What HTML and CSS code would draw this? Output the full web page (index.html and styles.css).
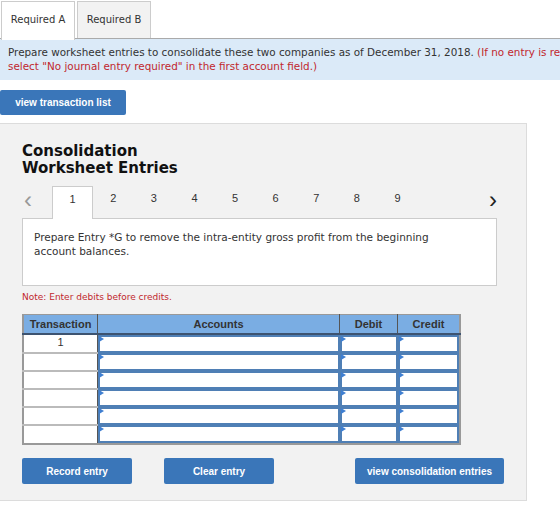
FILE: index.html
```html
<!DOCTYPE html>
<html>
<head>
    <meta charset="UTF-8">
    <title>Consolidation Worksheet</title>
    <link rel="stylesheet" href="styles.css">
</head>
<body>
    <div class="tabs">
        <div class="tab active">Required A</div>
        <div class="tab">Required B</div>
    </div>
    <div class="instructions">
        Prepare worksheet entries to consolidate these two companies as of December 31, 2018.
        <span class="red">(If no entry is required, select "No journal entry required" in the first account field.)</span>
    </div>

    <button class="btn btn-list">view transaction list</button>

    <div class="panel">
        <h2 class="panel-title">Consolidation<br>Worksheet Entries</h2>

        <div class="pager">
            <span class="arrow prev">&lsaquo;</span>
            <div class="pages">
                <span class="page current">1</span>
                <span class="page">2</span>
                <span class="page">3</span>
                <span class="page">4</span>
                <span class="page">5</span>
                <span class="page">6</span>
                <span class="page">7</span>
                <span class="page">8</span>
                <span class="page">9</span>
            </div>
            <span class="arrow next">&rsaquo;</span>
        </div>
        <div class="entry-text">
            Prepare Entry *G to remove the intra-entity gross profit from the beginning account balances.
        </div>

        <p class="note">Note: Enter debits before credits.</p>

        <table class="journal">
            <tr>
                <th class="col-trans">Transaction</th>
                <th class="col-acct">Accounts</th>
                <th class="col-num">Debit</th>
                <th class="col-num">Credit</th>
            </tr>
            <tr>
                <td class="trans">1</td>
                <td class="field"><div class="box"></div></td>
                <td class="field"><div class="box"></div></td>
                <td class="field"><div class="box"></div></td>
            </tr>
            <tr>
                <td class="trans"></td>
                <td class="field"><div class="box"></div></td>
                <td class="field"><div class="box"></div></td>
                <td class="field"><div class="box"></div></td>
            </tr>
            <tr>
                <td class="trans"></td>
                <td class="field"><div class="box"></div></td>
                <td class="field"><div class="box"></div></td>
                <td class="field"><div class="box"></div></td>
            </tr>
            <tr>
                <td class="trans"></td>
                <td class="field"><div class="box"></div></td>
                <td class="field"><div class="box"></div></td>
                <td class="field"><div class="box"></div></td>
            </tr>
            <tr>
                <td class="trans"></td>
                <td class="field"><div class="box"></div></td>
                <td class="field"><div class="box"></div></td>
                <td class="field"><div class="box"></div></td>
            </tr>
            <tr>
                <td class="trans"></td>
                <td class="field"><div class="box"></div></td>
                <td class="field"><div class="box"></div></td>
                <td class="field"><div class="box"></div></td>
            </tr>
        </table>

        <div class="actions">
            <button class="btn btn-record">Record entry</button>
            <button class="btn btn-clear">Clear entry</button>
            <button class="btn btn-view">view consolidation entries</button>
        </div>
    </div>
</body>
</html>
```

FILE: styles.css
```css
html {
    overflow: hidden; /* the page is wider than the window */
}

body {
    margin: 0;
    width: 630px;
    font-family: "DejaVu Sans", Verdana, sans-serif;
    font-size: 10.4px;
    color: #333;
    background: #fff;
}

/* Top tabs */
.tabs {
    display: flex;
    gap: 2px;
    padding: 1px 0 0 1px;
    border-bottom: 1px solid #aaa;
    height: 37px;
}

.tab {
    width: 72px;
    border: 1px solid #ccc;
    border-bottom: none;
    background: #f2f2f2;
    font-size: 10px;
    line-height: 36px;
    text-align: center;
    color: #333;
}

.tab.active {
    background: #fff;
    height: 38px;
}

.instructions {
    background: #dbeaf8;
    padding: 6px 8px 7px 8px;
    line-height: 14px;
    color: #333;
}

.red {
    color: #c1272d;
}

/* Buttons */
.btn {
    display: block;
    border: none;
    border-radius: 2px;
    background: #3a76b9;
    color: #fff;
    font-family: "Liberation Sans", Arial, sans-serif;
    font-weight: bold;
    font-size: 10px;
    height: 25px;
    padding: 0;
}

.btn-list {
    width: 126px;
    margin-top: 10px;
}

/* The grey panel */
.panel {
    width: 504px;
    margin-top: 8px;
    background: #f2f2f2;
    border: 1px solid #dcdcdc;
    border-left: none;
    padding: 19px 0 16px 22px;
}

.panel-title {
    margin: 0;
    font-size: 15px;
    line-height: 17px;
    font-weight: bold;
    color: #111;
}

.pager {
    display: flex;
    align-items: flex-end;
    margin-top: 9px;
    width: 475px;
    height: 32px;
}

.arrow {
    font-family: "Liberation Sans", Arial, sans-serif;
    font-size: 24px;
    line-height: 24px;
    color: #999;
    width: 28px;
    padding-left: 2px;
    height: 30px;
}

.arrow.next {
    color: #222;
    margin-left: auto;
    width: auto;
}

.pages {
    display: flex;
}

.page {
    width: 40.6px;
    height: 24px;
    padding-top: 6px;
    text-align: center;
    font-family: "Liberation Sans", Arial, sans-serif;
    font-size: 11px;
    color: #333;
}

.page.current {
    background: #fff;
    border: 1px solid #ccc;
    border-bottom: none;
    height: 26px;
    width: 39px;
    margin-bottom: -1px;
    position: relative;
    z-index: 1;
}

.entry-text {
    width: 410px;
    height: 45px;
    background: #fff;
    border: 1px solid #ccc;
    padding: 11px 52px 10px 11px;
    line-height: 14px;
    font-size: 10.5px;
}

.note {
    margin: 6px 0 12px 0;
    font-size: 9px;
    color: #c1272d;
}

/* Journal table */
.journal {
    border-collapse: collapse;
    border: 2px solid #999;
    border-top: 1px solid #999;
    font-family: "Liberation Sans", Arial, sans-serif;
    font-size: 11px;
}

.journal th {
    background: #7aade3;
    color: #333;
    font-weight: bold;
    height: 18px;
    padding: 0;
    border-left: 1px solid #555;
    border-bottom: 2px solid #3d5370;
}

.journal th:first-child {
    border-left: none;
}

.col-trans { width: 73px; }
.col-acct { width: 241px; }
.col-num { width: 57px; }
.journal th:last-child { width: 61px; }

.trans {
    height: 16px;
    padding: 0;
    background: #fff;
    text-align: center;
    border-top: 2px solid #bbb;
    border-right: 1px solid #555;
    vertical-align: top;
    line-height: 15px;
}

.journal tr:nth-child(2) .trans {
    border-top: none;
}

.field {
    padding: 0;
    height: 18px;
    background: #4f7fb5;
}

.box {
    position: relative;
    height: 14px;
    margin: 2px 2px 2px 2px;
    background: #fff;
}

/* small blue marker in each input */
.box::before {
    content: "";
    position: absolute;
    left: -1px;
    top: -1px;
    border-left: 5px solid #3f7fd1;
    border-top: 3px solid transparent;
    border-bottom: 3px solid transparent;
}

.actions {
    display: flex;
    margin-top: 13px;
}

.btn-record {
    width: 110px;
    height: 26px;
}

.btn-clear {
    width: 110px;
    height: 26px;
    margin-left: 32px;
}

.btn-view {
    width: 149px;
    height: 26px;
    margin-left: 81px;
}
```
